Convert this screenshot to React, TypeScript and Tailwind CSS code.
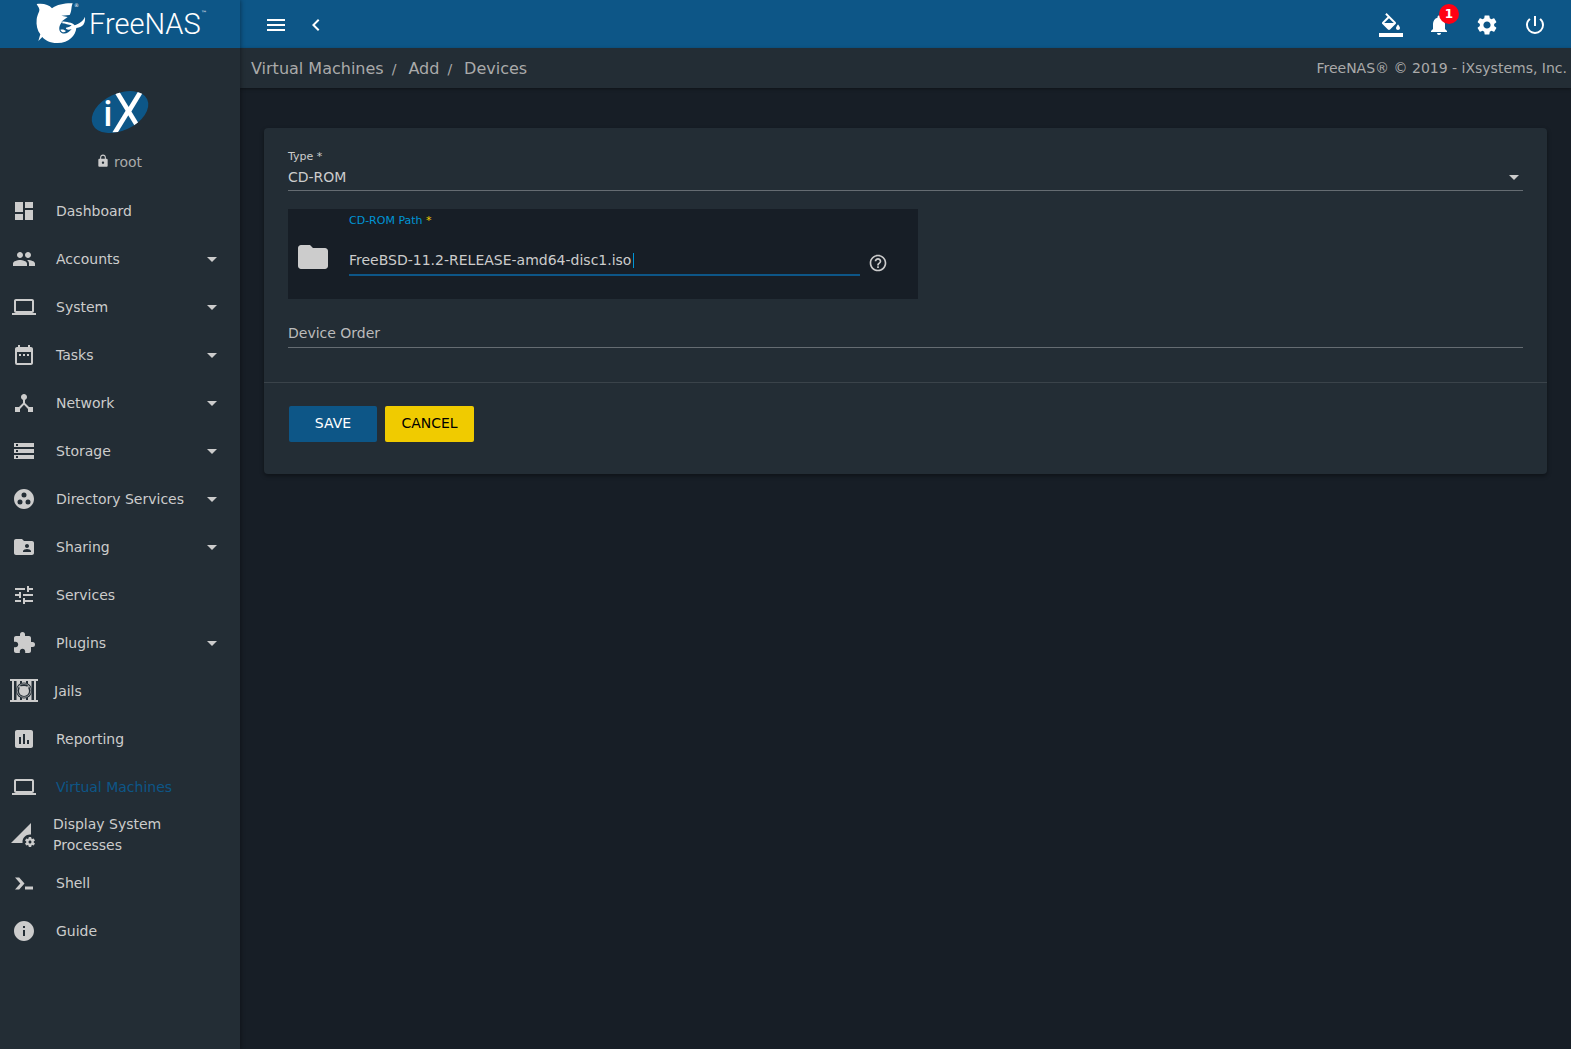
import { useState } from "react";
import type { ReactNode } from "react";
import {
  MdArrowDropDown,
  MdAssessment,
  MdChevronLeft,
  MdDashboard,
  MdDateRange,
  MdDeviceHub,
  MdExtension,
  MdFolder,
  MdFolderShared,
  MdGroupWork,
  MdHelpOutline,
  MdInfo,
  MdLaptop,
  MdLock,
  MdMenu,
  MdNotifications,
  MdPeople,
  MdPermDataSetting,
  MdPowerSettingsNew,
  MdSettings,
  MdStorage,
  MdTune,
} from "react-icons/md";

interface NavItem {
  label: string;
  icon: ReactNode;
  expandable?: boolean;
  active?: boolean;
  rowClass?: string;
}

function JailIcon() {
  return (
    <svg width="28" height="24" viewBox="0 0 28 24" fill="currentColor">
      <path d="M0 0h28v2H0zM0 21h28v2H0z" />
      <path d="M2 2h2v19H2zM6.500 2H10v19H6.500zM12 2h4v19h-4zM18 2h3.500v19H18zM24 2h2v19h-2z" />
      <circle cx="14" cy="11.500" r="8" className="fill-[#232d35]" />
      <circle cx="14" cy="11.500" r="6.800" fill="none" stroke="currentColor" strokeWidth="1" opacity="0.700" />
      <circle cx="14" cy="12" r="5" />
      <path d="M9 7l4 .5-3 3zM19 7l-4 1 2.800 2.800z" />
    </svg>
  );
}

function ShellIcon() {
  return (
    <svg width="24" height="24" viewBox="0 0 24 24" fill="currentColor">
      <path d="M3 6.500h4.200l5.300 6-5.300 6H3l5.300-6zM13 15.500h8v3h-8z" />
    </svg>
  );
}

function PaintIcon() {
  return (
    <svg width="24" height="24" viewBox="0 0 24 24" fill="currentColor">
      <path d="M16.56 8.94L7.62 0 6.21 1.41l2.38 2.38-5.15 5.15c-.59.59-.59 1.54 0 2.12l5.5 5.5c.29.29.68.44 1.06.44s.77-.15 1.06-.44l5.5-5.5c.59-.58.59-1.53 0-2.12zM5.21 10L10 5.21 14.79 10H5.21zM19 11.500s-2 2.17-2 3.500c0 1.100.9 2 2 2s2-.9 2-2c0-1.330-2-3.500-2-3.500z" />
      <path d="M0 20h24v4H0z" />
    </svg>
  );
}

const navItems: NavItem[] = [
  { label: "Dashboard", icon: <MdDashboard size={24} /> },
  { label: "Accounts", icon: <MdPeople size={24} />, expandable: true },
  { label: "System", icon: <MdLaptop size={24} />, expandable: true },
  { label: "Tasks", icon: <MdDateRange size={24} />, expandable: true },
  { label: "Network", icon: <MdDeviceHub size={24} />, expandable: true },
  { label: "Storage", icon: <MdStorage size={24} />, expandable: true },
  { label: "Directory Services", icon: <MdGroupWork size={24} />, expandable: true },
  { label: "Sharing", icon: <MdFolderShared size={24} />, expandable: true },
  { label: "Services", icon: <MdTune size={24} /> },
  { label: "Plugins", icon: <MdExtension size={24} />, expandable: true },
  { label: "Jails", icon: <JailIcon />, rowClass: "pl-2.5 gap-4" },
  { label: "Reporting", icon: <MdAssessment size={24} /> },
  { label: "Virtual Machines", icon: <MdLaptop size={24} />, active: true },
  { label: "Display System Processes", icon: <MdPermDataSetting size={24} />, rowClass: "pl-[11px] pr-12 gap-[18px]" },
  { label: "Shell", icon: <ShellIcon /> },
  { label: "Guide", icon: <MdInfo size={24} /> },
];

function Logo() {
  return (
    <a href="#" aria-label="FreeNAS" className="flex h-12 items-center bg-[#0d5687] pl-[35px] text-white">
      <svg width="176" height="46" viewBox="0 0 176 46" fill="currentColor">
        <g transform="translate(-35 -1) scale(0.3333)">
          <path d="M110 12C128 9 147 13 156 25C172 13 196 9 218 10C213 21 216 34 209 45L184 47L203 51C197 57 188 60 184 66C193 62 203 68 212 68C217 69 221 73 224 76C236 71 249 65 255 50C257 69 250 81 229 84C227 106 206 130 171 129C149 129 135 121 127 111L115 123L121 103C112 92 108 76 110 58C112 43 119 36 118 28C117 21 112 18 110 12Z" />
          <path
            d="M187 65C177 75 174 91 184 98C194 105 207 98 215 87C204 92 196 87 198 83C207 82 211 79 215 76C204 74 197 71 187 70Z"
            className="fill-[#0d5687]"
          />
          <path d="M181 89C189 87 193 89 198 93C192 99 186 98 181 89Z" />
        </g>
        <text x="54" y="33" fontSize="29" fontWeight="300" fontFamily="Roboto, sans-serif">
          FreeNAS
        </text>
        <text x="39" y="6" fontSize="5" fontFamily="DejaVu Sans, sans-serif">
          ®
        </text>
        <text x="166" y="14" fontSize="6" fontFamily="DejaVu Sans, sans-serif">
          ™
        </text>
      </svg>
    </a>
  );
}

function CompanyMark() {
  return (
    <svg width="58" height="44" viewBox="0 0 58 44" role="img" aria-label="iX" className="overflow-visible">
      <defs>
        <clipPath id="mark">
          <ellipse cx="29" cy="22" rx="30" ry="18.500" transform="rotate(-25 29 22)" />
        </clipPath>
      </defs>
      <ellipse cx="29" cy="22" rx="30" ry="18.500" transform="rotate(-25 29 22)" fill="#0d5687" />
      <text x="12" y="36" fontSize="35" fontWeight="600" fill="#fff" fontFamily="Open Sans, sans-serif">
        i
      </text>
      <g clipPath="url(#mark)">
        <text
          x="20"
          y="42"
          fontSize="56"
          fill="#fff"
          fontFamily="Liberation Sans Narrow, DejaVu Sans Condensed, sans-serif"
        >
          X
        </text>
      </g>
    </svg>
  );
}

function NavRow({ item }: { item: NavItem }) {
  return (
    <li className="relative">
      <a
        href="#"
        className={`flex h-12 items-center ${item.rowClass ?? "gap-5 pl-3"} ${
          item.active ? "text-[#0d5687]" : "text-[#cccccc]"
        }`}
      >
        <span className="shrink-0 text-[#cccccc]">{item.icon}</span>
        <span className="flex flex-1 items-center justify-between leading-[21px]">
          {item.label}
          {item.expandable && <MdArrowDropDown size={24} className="mr-4 shrink-0" />}
        </span>
      </a>
    </li>
  );
}

function Sidebar() {
  return (
    <aside className="relative z-10 w-60 shrink-0 bg-[#232d35] shadow-[1px_0_4px_rgba(0,0,0,0.35)]">
      <Logo />
      <div className="flex flex-col items-center pt-[42px]">
        <CompanyMark />
        <button className="mt-[18px] flex h-5 items-center gap-1 pr-0.5 text-[#aaaaaa]">
          <MdLock size={14} className="mb-0.5 text-[#cccccc]" />
          root
        </button>
      </div>
      <nav className="pt-[15px]">
        <ul>
          {navItems.map((item) => (
            <NavRow key={item.label} item={item} />
          ))}
        </ul>
      </nav>
    </aside>
  );
}

function TopBar() {
  return (
    <header className="flex h-12 items-center justify-between bg-[#0d5687] pt-0.5 pr-3 pl-4 text-white">
      <div className="flex">
        <button aria-label="Toggle menu" className="flex w-10 justify-center">
          <MdMenu size={24} />
        </button>
        <button aria-label="Collapse menu" className="flex w-10 justify-center">
          <MdChevronLeft size={24} />
        </button>
      </div>
      <div className="flex">
        <button aria-label="Theme" className="flex w-12 justify-center">
          <PaintIcon />
        </button>
        <button aria-label="Notifications" className="relative flex w-12 justify-center">
          <MdNotifications size={24} />
          <span className="absolute -top-[9px] right-1 flex size-5 items-center justify-center rounded-full bg-[#ff0013] text-xs font-bold">
            1
          </span>
        </button>
        <button aria-label="Settings" className="flex w-12 justify-center">
          <MdSettings size={24} />
        </button>
        <button aria-label="Power" className="flex w-12 justify-center">
          <MdPowerSettingsNew size={24} />
        </button>
      </div>
    </header>
  );
}

function Breadcrumb() {
  return (
    <div className="flex h-10 items-center justify-between bg-[#232d35] pr-1 pl-[11px] text-[#aaaaaa] shadow-[0_1px_3px_rgba(0,0,0,0.4)]">
      <nav aria-label="Breadcrumb" className="flex items-center pt-0.5 text-base">
        <a href="#">Virtual Machines</a>
        <span className="pr-3 pl-2 text-sm">/</span>
        <a href="#">Add</a>
        <span className="pr-3 pl-2 text-sm">/</span>
        <a href="#">Devices</a>
      </nav>
      <p>FreeNAS® © 2019 - iXsystems, Inc.</p>
    </div>
  );
}

function DeviceForm() {
  const [type, setType] = useState("CD-ROM");
  const [path, setPath] = useState("FreeBSD-11.2-RELEASE-amd64-disc1.iso");
  const [order, setOrder] = useState("");
  const [edited, setEdited] = useState(false);

  return (
    <form
      onSubmit={(e) => e.preventDefault()}
      className="rounded-sm bg-[#232d35] text-[#cccccc] shadow-[0_2px_4px_rgba(0,0,0,0.4)]"
    >
      <div className="px-6 pt-[21px] pb-[34px]">
        <label htmlFor="type" className="block text-[11px] leading-4">
          Type *
        </label>
        <div className="relative border-b border-[#656c72]">
          <select
            id="type"
            value={type}
            onChange={(e) => setType(e.target.value)}
            className="block h-[25px] w-full appearance-none bg-transparent pb-0.5 outline-none"
          >
            <option>CD-ROM</option>
            <option>NIC</option>
            <option>Disk</option>
            <option>Raw File</option>
            <option>VNC</option>
          </select>
          <MdArrowDropDown size={24} className="pointer-events-none absolute top-0 -right-[3px]" />
        </div>

        <div className="mt-[18px] flex h-[90px] w-[51%] bg-[#171e26] pr-[30px] pl-[7px]">
          <button type="button" aria-label="Browse" className="shrink-0 pt-1.5">
            <MdFolder size={36} />
          </button>
          <div className="ml-[18px] flex-1 pt-1">
            <label htmlFor="path" className="block text-[11px] leading-4 text-[#0095d5]">
              CD-ROM Path <span className="text-[#f0cb00]">*</span>
            </label>
            <div className="relative mt-4">
              <input
                id="path"
                value={path}
                onFocus={() => setEdited(true)}
                onChange={(e) => setPath(e.target.value)}
                className="block h-[31px] w-full border-b-2 border-[#0d5687] bg-transparent caret-[#0095d5] outline-none"
              />
              {/* resting caret, until the field takes the real one */}
              {!edited && <span className="pointer-events-none absolute top-2 left-[284px] h-[15px] w-px bg-[#0095d5]" />}
            </div>
          </div>
          <button type="button" aria-label="Help" className="ml-2 shrink-0 pt-[18px]">
            <MdHelpOutline size={20} />
          </button>
        </div>

        <div className="relative mt-5 border-b border-[#656c72]">
          <label
            htmlFor="order"
            className={`pointer-events-none absolute top-1 left-0 ${order ? "hidden" : "text-[#bbbbbb]"}`}
          >
            Device Order
          </label>
          <input
            id="order"
            value={order}
            onChange={(e) => setOrder(e.target.value)}
            className="block h-7 w-full bg-transparent outline-none"
          />
        </div>
      </div>
      <div className="flex gap-2 border-t border-[#3a434a] px-[25px] pt-[23px] pb-8">
        <button type="submit" className="h-9 w-[88px] rounded-xs bg-[#0d5687] pb-0.5 text-white">
          SAVE
        </button>
        <button type="button" className="h-9 w-[89px] rounded-xs bg-[#f0cb00] pb-0.5 text-black">
          CANCEL
        </button>
      </div>
    </form>
  );
}

export default function App() {
  return (
    <div className="flex min-h-screen bg-[#171e26] font-['DejaVu_Sans',sans-serif] text-sm text-[#cccccc]">
      <Sidebar />
      <div className="min-w-0 flex-1">
        <TopBar />
        <Breadcrumb />
        <main className="px-6 pt-10">
          <DeviceForm />
        </main>
      </div>
    </div>
  );
}
